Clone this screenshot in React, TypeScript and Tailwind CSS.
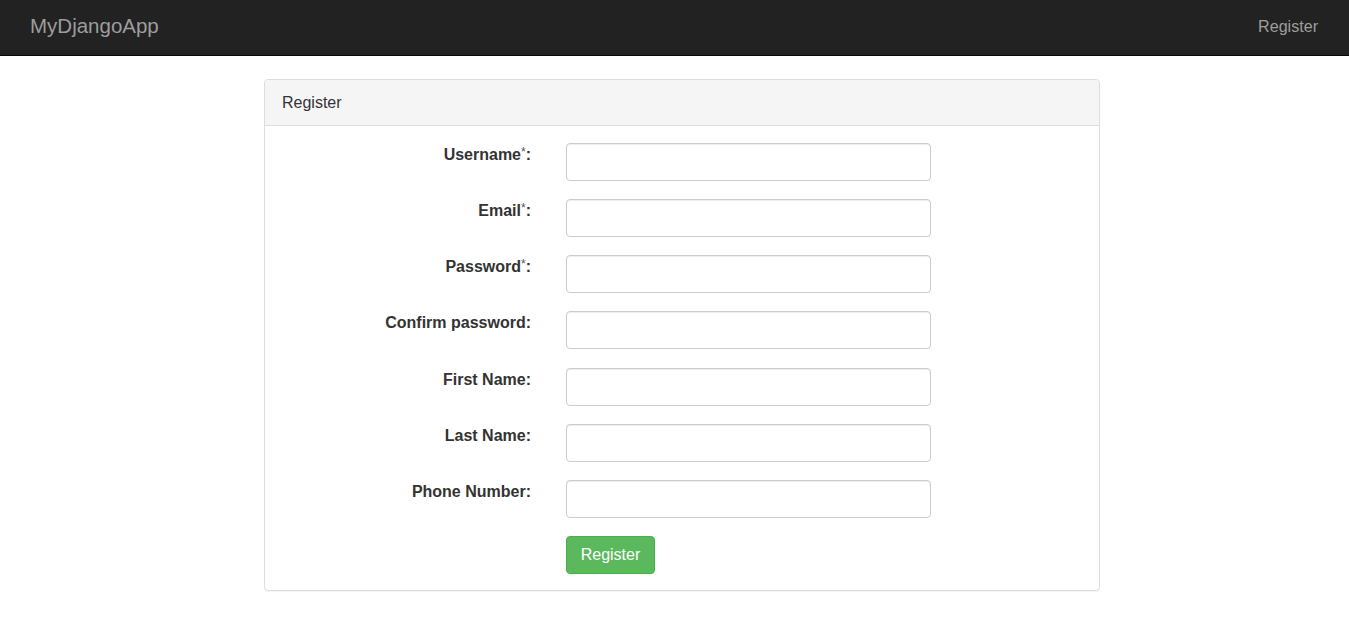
import React from 'react';

const fields = [
  { label: 'Username', required: true },
  { label: 'Email', required: true },
  { label: 'Password', required: true },
  { label: 'Confirm password', required: false },
  { label: 'First Name', required: false },
  { label: 'Last Name', required: false },
  { label: 'Phone Number', required: false },
];

const App = () => {
  return (
    <div className="min-h-[621px] bg-white font-['Liberation_Sans',Arial,sans-serif] text-[#333]">
      {/* Navbar */}
      <nav className="h-[56px] bg-[#222] border-b border-[#080808] flex items-center justify-between pl-[30px] pr-[31px]">
        <a className="text-[20.5px] text-[#9d9d9d] leading-none -mt-[3px]">MyDjangoApp</a>
        <a className="text-[16.1px] text-[#9d9d9d] leading-none -mt-[3px]">Register</a>
      </nav>

      {/* Panel */}
      <div className="ml-[264px] mt-[23px] w-[836px] border border-[#ddd] rounded-[4px] shadow-[0_1px_1px_rgba(0,0,0,0.05)]">
        <div className="h-[46px] bg-[#f5f5f5] border-b border-[#ddd] rounded-t-[4px] px-[17px] flex items-center text-[16px] text-[#333]">
          Register
        </div>
        <div className="pt-[17px] pb-[16px] flex flex-col gap-[18.15px]">
          {fields.map((f) => (
            <div key={f.label} className="flex items-start">
              <label className="w-[266px] text-right pt-[2px] leading-[20px] text-[16px] font-bold text-[#333]">
                {f.label}
                {f.required && <sup className="font-normal text-[12px] top-[-4px] text-[#555]">*</sup>}:
              </label>
              <input
                type="text"
                className="ml-[35px] w-[365px] h-[38px] border border-[#ccc] rounded-[4px] shadow-[inset_0_1px_1px_rgba(0,0,0,0.075)] px-3 outline-none"
              />
            </div>
          ))}
          <div className="flex">
            <button className="ml-[301px] w-[89px] h-[38px] bg-[#5cb85c] border border-[#4cae4c] rounded-[4px] text-white text-[16px]">
              Register
            </button>
          </div>
        </div>
      </div>
    </div>
  );
};

export default App;
